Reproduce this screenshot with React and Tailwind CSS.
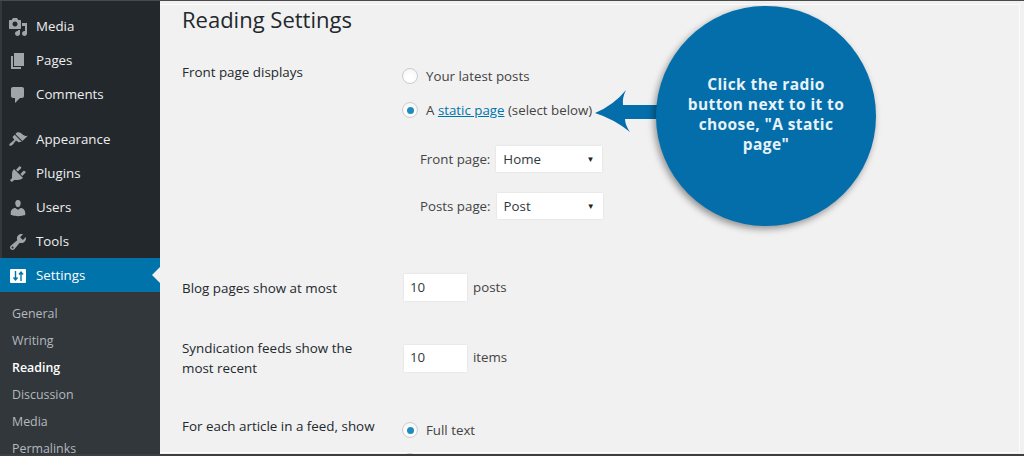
const Icon = ({ d, className = 'text-[#a0a5aa]' }) => (
  <svg className={`h-5 w-5 shrink-0 ${className}`} viewBox="0 0 20 20" fill="currentColor">
    <path d={d} />
  </svg>
);

const SettingsIcon = () => (
  <svg className="h-5 w-5 shrink-0" viewBox="0 0 20 20" fill="none">
    <rect x="2" y="3" width="16" height="14" rx="1" fill="#ffffff" />
    <path d="M7.5 5v9M5.5 11.5l2 2.5 2-2.5M13 15V6M11 8.5l2-2.5 2 2.5" stroke="#0073aa" strokeWidth="1.4" />
  </svg>
);

const icons = {
  media: 'M13 11V4c0-.55-.45-1-1-1h-1.67L9 1H5L3.67 3H2c-.55 0-1 .45-1 1v7c0 .55.45 1 1 1h10c.55 0 1-.45 1-1zM7 4.5c1.38 0 2.5 1.12 2.5 2.5S8.38 9.5 7 9.5 4.5 8.38 4.5 7 5.62 4.5 7 4.5zM14 6h5v10.5c0 1.38-1.12 2.5-2.5 2.5S14 17.88 14 16.5s1.12-2.5 2.5-2.5c.17 0 .34.02.5.05V9h-3V6zm-4 8.05V13h2v3.5c0 1.38-1.12 2.5-2.5 2.5S7 17.88 7 16.5 8.12 14 9.5 14c.17 0 .34.02.5.05z',
  pages: 'M6 15V2h10v13H6zm-1 1h8v2H3V5h2v11z',
  comments: 'M5 2h9c1.1 0 2 .9 2 2v7c0 1.1-.9 2-2 2h-2l-5 5v-5H5c-1.1 0-2-.9-2-2V4c0-1.1.9-2 2-2z',
  appearance: 'M14.48 11.06L7.41 3.99l1.5-1.5c.5-.56 2.3-.47 3.51.32 1.21.8 1.43 1.28 2.91 2.1 1.18.64 2.45 1.26 4.45.85zm-.71.71L6.7 4.7 4.93 6.47c-.39.39-.39 1.02 0 1.41l1.06 1.06c.39.39.39 1.03 0 1.42-.6.6-1.43 1.11-2.21 1.69-.35.26-.7.53-1.01.84C1.43 13.23.91 14.91 1.47 15.47c.56.56 2.24.04 3.58-1.3.31-.31.58-.66.84-1.01.58-.78 1.09-1.61 1.69-2.21.39-.39 1.02-.39 1.41 0l1.06 1.06c.39.39 1.02.39 1.41 0z',
  plugins: 'M13.11 4.36L9.87 7.6 8 5.73l3.24-3.24c.35-.34 1.05-.2 1.56.32.52.51.66 1.21.31 1.55zm-8 1.77l.91-1.12 9.01 9.01-1.19.84c-.71.71-2.63 1.16-3.82 1.16H6.14L4.9 17.26c-.59.59-1.54.59-2.12 0-.59-.58-.59-1.53 0-2.12l1.24-1.24v-3.88c0-1.13.4-3.19 1.09-3.89zm7.26 3.97l3.24-3.24c.34-.35 1.04-.21 1.55.31.52.51.66 1.21.31 1.55l-3.24 3.25z',
  users: 'M10 9.25c-2.27 0-2.73-3.44-2.73-3.44C7 4.02 7.82 2 9.97 2c2.16 0 2.98 2.02 2.71 3.81 0 0-.41 3.44-2.68 3.44zm0 2.57L12.72 10c2.39 0 4.52 2.33 4.52 4.53v2.49s-3.65 1.13-7.24 1.13c-3.65 0-7.24-1.13-7.24-1.13v-2.49c0-2.25 1.94-4.48 4.47-4.48z',
  tools: 'M16.68 9.77c-1.34 1.34-3.3 1.67-4.95.99l-5.41 6.52c-.99.99-2.59.99-3.58 0s-.99-2.59 0-3.57l6.52-5.42c-.68-1.65-.35-3.61.99-4.95 1.28-1.28 3.12-1.62 4.72-1.06l-2.89 2.89 2.82 2.82 2.86-2.87c.53 1.58.18 3.39-1.08 4.65zM3.81 16.21c.4.39 1.04.39 1.43 0 .4-.4.4-1.04 0-1.43-.39-.4-1.03-.4-1.43 0-.39.39-.39 1.03 0 1.43z',
};

const MenuItem = ({ icon, label }) => (
  <div className="flex h-[34px] shrink-0 items-center gap-2 pl-2 pt-[2px] text-[13.3px] text-[#eeeeee]">
    <Icon d={icons[icon]} />
    <span>{label}</span>
  </div>
);

const Radio = ({ checked }) => (
  <span className="flex h-4 w-4 shrink-0 items-center justify-center rounded-full border border-[#c8ccd0] bg-white shadow-inner">
    {checked && <span className="h-[7px] w-[7px] rounded-full bg-[#1e8cbe]" />}
  </span>
);

const Select = ({ value }) => (
  <div className="flex h-[26px] w-[106px] items-center justify-between bg-white pl-[7px] pr-2 text-[13.3px] text-[#32373c] shadow-[0_0_2px_rgba(0,0,0,0.1)]">
    <span>{value}</span>
    <span className="text-[8px] text-[#222222]">▼</span>
  </div>
);

const NumberBox = ({ unit }) => (
  <div className="flex items-center gap-[6px]">
    <div className="flex h-[27px] w-[63px] items-center bg-white pl-[6px] text-[13.3px] text-[#32373c] shadow-[0_0_2px_rgba(0,0,0,0.1)]">10</div>
    <span className="text-[13.3px] text-[#444444]">{unit}</span>
  </div>
);

const rowLabel = 'w-[222px] shrink-0 text-[13.4px] font-medium leading-5 text-[#23282d]';

export default function App() {
  return (
    <div className="relative flex h-[456px] w-[1024px] overflow-hidden bg-[#f1f1f1] font-['Open_Sans',sans-serif]">
      <aside className="flex w-[160px] shrink-0 flex-col bg-[#23282d] pt-[9px] shadow-[inset_2px_0_0_#33383c]">
        <MenuItem icon="media" label="Media" />
        <MenuItem icon="pages" label="Pages" />
        <MenuItem icon="comments" label="Comments" />
        <div className="h-[11px] shrink-0" />
        <MenuItem icon="appearance" label="Appearance" />
        <MenuItem icon="plugins" label="Plugins" />
        <MenuItem icon="users" label="Users" />
        <MenuItem icon="tools" label="Tools" />
        <div className="relative flex h-[34px] shrink-0 items-center gap-2 bg-[#0073aa] pl-2 pt-[2px] text-[13.3px] text-white">
          <SettingsIcon />
          <span>Settings</span>
          <span className="absolute right-0 top-[9px] h-0 w-0 border-y-[8px] border-r-[8px] border-y-transparent border-r-[#f1f1f1]" />
        </div>
        <div className="flex flex-1 flex-col bg-[#32373c] pt-[9px] pl-3 text-[12.4px] text-[#b4b9be]">
          <div className="flex h-[27px] shrink-0 items-center">General</div>
          <div className="flex h-[27px] shrink-0 items-center">Writing</div>
          <div className="flex h-[27px] shrink-0 items-center font-semibold text-white">Reading</div>
          <div className="flex h-[27px] shrink-0 items-center">Discussion</div>
          <div className="flex h-[27px] shrink-0 items-center">Media</div>
          <div className="flex h-[27px] shrink-0 items-center">Permalinks</div>
        </div>
      </aside>

      <main className="flex-1 pl-[22px] pt-[4px]">
        <h1 className="text-[22px] leading-[30px] text-[#23282d]">Reading Settings</h1>

        <div className="mt-[28px] flex">
          <div className="w-[220px] shrink-0 text-[13.4px] font-medium leading-5 text-[#23282d]">Front page displays</div>
          <div className="flex flex-col pt-[4px] text-[13.3px] leading-5 text-[#444444]">
            <label className="flex items-center gap-[8px]"><Radio /><span>Your latest posts</span></label>
            <label className="mt-[14px] flex items-center gap-[8px]">
              <Radio checked />
              <span>A <a className="text-[#0073aa] underline">static page</a> (select below)</span>
            </label>
            <div className="mt-[26px] ml-[18px] flex items-center gap-[6px]"><span>Front page:</span><Select value="Home" /></div>
            <div className="mt-[21px] ml-[18px] flex items-center gap-[6px]"><span>Posts page:</span><Select value="Post" /></div>
          </div>
        </div>

        <div className="mt-[55px] flex items-center">
          <div className={rowLabel}>Blog pages show at most</div>
          <NumberBox unit="posts" />
        </div>

        <div className="mt-[37px] flex pb-[2px]">
          <div className={rowLabel}>Syndication feeds show the<br />most recent</div>
          <NumberBox unit="items" />
        </div>

        <div className="mt-[36px] flex">
          <div className="w-[220px] shrink-0 text-[13.4px] font-medium leading-5 text-[#23282d]">For each article in a feed, show</div>
          <div className="flex flex-col pt-[4px] text-[13.3px] leading-5 text-[#444444]">
            <label className="flex items-center gap-[8px]"><Radio checked /><span>Full text</span></label>
            <span className="mt-[13px]"><Radio /></span>
          </div>
        </div>
      </main>

      <svg className="absolute left-[590px] top-[85px] h-[52px] w-[75px]" viewBox="0 0 75 52" fill="#036eaa">
        <path d="M5 28 Q24 20 36 5 Q32 13 33 20 H72 V34 H35 Q35 40 40 47 Q24 34 5 28 Z" />
      </svg>
      <div className="absolute left-[656px] top-[6px] flex h-[220px] w-[220px] flex-col items-center rounded-full bg-[#036eaa] pt-[68px] text-center text-[15.5px] font-bold leading-5 tracking-[0.4px] text-[#e8f2f8] shadow-[-2px_3px_7px_rgba(0,0,0,0.4)]">
        <span>Click the radio</span>
        <span>button next to it to</span>
        <span>choose, "A static</span>
        <span>page"</span>
      </div>

      <div className="absolute bottom-[3px] left-[160px] right-[4px] top-[4px] border-b border-r border-t border-white/70" />
      <div className="absolute inset-x-0 top-0 h-[1px] bg-[#4a4a4a]" />
      <div className="absolute inset-x-0 bottom-0 h-[2px] bg-[#3c3f42]" />
    </div>
  );
}
